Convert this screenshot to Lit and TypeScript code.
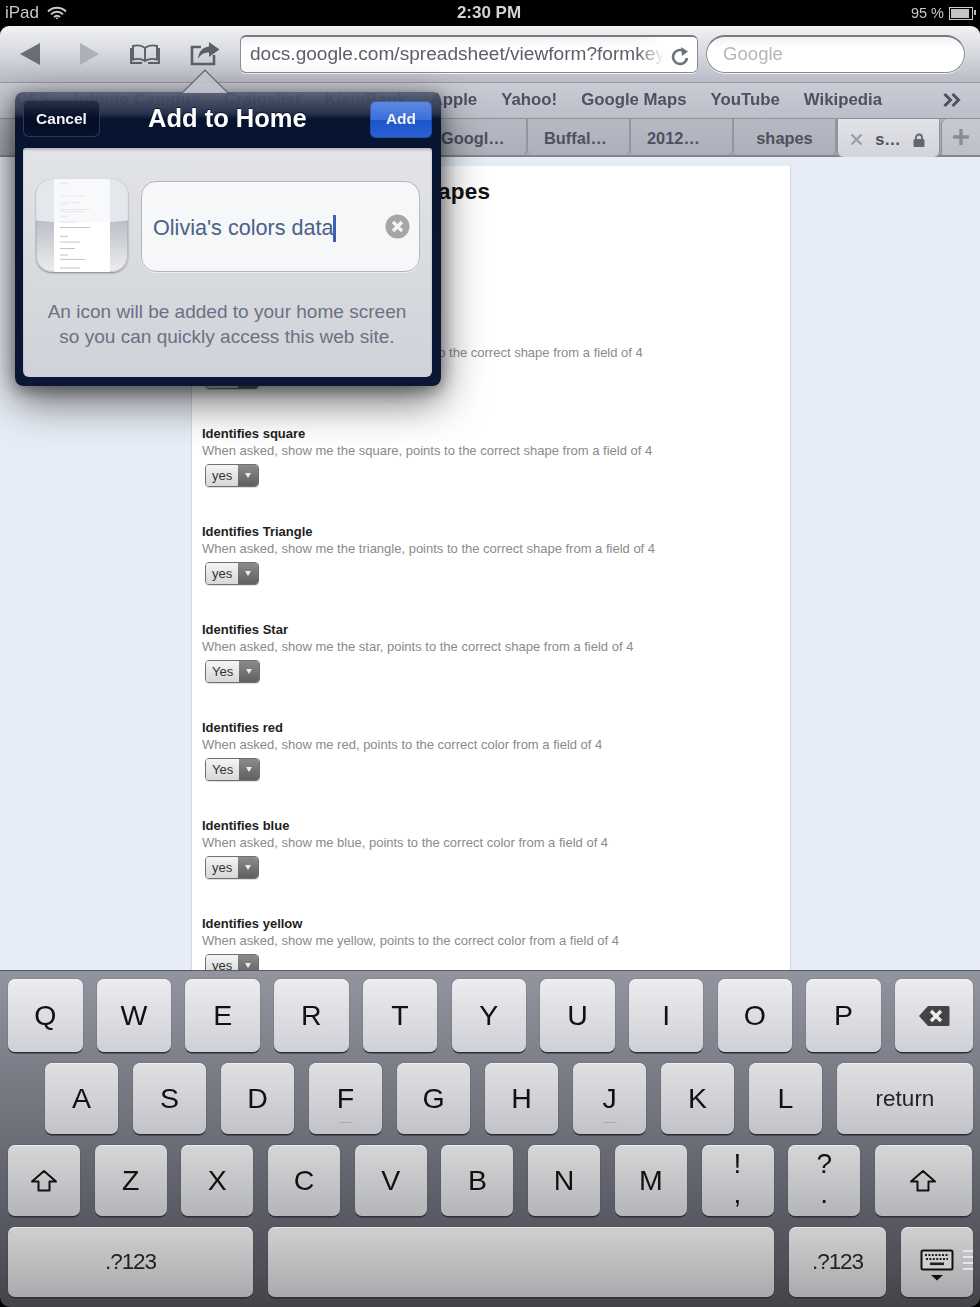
import { LitElement, html, css, svg } from "lit";
import { customElement } from "lit/decorators.js";

const FORM = [
  ["Identifies circle", "When asked, show me the circle, points to the correct shape from a field of 4", "yes"],
  ["Identifies square", "When asked, show me the square, points to the correct shape from a field of 4", "yes"],
  ["Identifies Triangle", "When asked, show me the triangle, points to the correct shape from a field of 4", "yes"],
  ["Identifies Star", "When asked, show me the star, points to the correct shape from a field of 4", "Yes"],
  ["Identifies red", "When asked, show me red, points to the correct color from a field of 4", "Yes"],
  ["Identifies blue", "When asked, show me blue, points to the correct color from a field of 4", "yes"],
  ["Identifies yellow", "When asked, show me yellow, points to the correct color from a field of 4", "yes"],
];
const BOOKMARKS = ["CSS", "Infinite Campus", "Craigslist", "KleinBank", "Apple", "Yahoo!", "Google Maps", "YouTube", "Wikipedia"];
const TABS = ["Olivia…", "Gmail…", "Google…", "Google…", "Googl…", "Buffal…", "2012…"];

const shiftIcon = html`<svg class="ico" width="28" height="24" viewBox="0 0 28 24"><path d="M14 2 L26 12.5 H19.5 V21.5 H8.5 V12.5 H2 Z" fill="none" stroke="#111" stroke-width="2" stroke-linejoin="round"/></svg>`;
const backIcon = html`<svg class="ico" width="32" height="22" viewBox="0 0 32 22"><path d="M10 1 H30 a1.5 1.5 0 0 1 1.5 1.5 V19.5 a1.5 1.5 0 0 1 -1.5 1.5 H10 L1 11 Z" fill="#444"/><path d="M13 6 L23 16 M23 6 L13 16" stroke="#eee" stroke-width="3.4"/></svg>`;
const kbIcon = html`<span class="kbwrap"><svg class="ico" width="34" height="32" viewBox="0 0 34 32"><rect x="1.5" y="1.5" width="31" height="19" rx="1.5" fill="#cfcfd2" stroke="#111" stroke-width="2"/><path d="M5 6 H29 M6 10 H28" stroke="#222" stroke-width="2" stroke-dasharray="2 1.4"/><rect x="10" y="13.5" width="14" height="2.6" fill="#222"/><path d="M11 26 H23 L17 31.5 Z" fill="#111"/></svg><i class="grip"></i></span>`;

type K = { t?: any; w?: number; cls?: string; bump?: boolean };
const letters = (s: string, extra: Partial<K> = {}): K[] => s.split("").map((t) => ({ t, ...extra }));
const ROWS: { cls: string; keys: K[] }[] = [
  { cls: "r1", keys: [...letters("QWERTYUIOP", { cls: "grow" }), { t: backIcon, w: 78 }] },
  {
    cls: "r2",
    keys: [
      ...letters("ASD", { w: 73 }),
      { t: "F", w: 73, bump: true },
      ...letters("GH", { w: 73 }),
      { t: "J", w: 73, bump: true },
      ...letters("KL", { w: 73 }),
      { t: "return", w: 136, cls: "word" },
    ],
  },
  {
    cls: "r3",
    keys: [
      { t: shiftIcon, w: 72 },
      ...letters("ZXCVBNM", { w: 72 }),
      { t: html`<span class="stack"><b>!</b><b>,</b></span>`, w: 72 },
      { t: html`<span class="stack"><b>?</b><b>.</b></span>`, w: 72 },
      { t: shiftIcon, w: 97 },
    ],
  },
  {
    cls: "r4",
    keys: [
      { t: ".?123", w: 245, cls: "word tight" },
      { t: "", w: 506 },
      { t: ".?123", w: 97, cls: "word tight" },
      { t: kbIcon, w: 72 },
    ],
  },
];

const thumbLines = [6, 23, 32, 35, 42, 45, 51, 59, 67, 79, 87, 96, 105, 111, 123];

@customElement("app-root")
export class AppRoot extends LitElement {
  static styles = css`
    :host {
      display: block;
      width: 980px;
      height: 1307px;
      position: relative;
      overflow: hidden;
      background: #000;
      font-family: "Liberation Sans", Arial, sans-serif;
    }
    .screen { display: flex; flex-direction: column; height: 1307px; filter: blur(0.35px); }

    .status { height: 26px; display: grid; grid-template-columns: 1fr auto 1fr; align-items: center; color: #c9c9c9; padding: 0 7px 0 5px; flex: none; }
    .status .l { display: flex; align-items: center; gap: 8px; font-size: 17px; }
    .status .c { font-size: 17px; font-weight: bold; color: #d4d4d4; }
    .status .r { display: flex; justify-content: flex-end; align-items: center; gap: 5px; font-size: 14.5px; }
    .batt { width: 20px; height: 9px; border: 1.5px solid #ccc; padding: 1px; display: block; position: relative; }
    .batt::before { content: ""; display: block; width: 18px; height: 9px; background: #c4c4c4; }
    .batt::after { content: ""; position: absolute; right: -4px; top: 2.5px; width: 2px; height: 5px; background: #bbb; }

    .toolbar {
      height: 57px; flex: none; display: flex; align-items: center; position: relative;
      background: linear-gradient(#f1f2f5 0%, #d9dbe1 45%, #b9bcc6 100%);
      border-radius: 9px 9px 0 0; border-bottom: 1px solid #9a9ca5; box-sizing: border-box; padding-bottom: 1px;
    }
    .tool { display: block; flex: none; }
    .t-back { margin-left: 20px; }
    .t-fwd { margin-left: 40px; }
    .t-book { margin-left: 31px; }
    .t-share { margin-left: 30px; }
    .url {
      margin-left: 20px; width: 458px; height: 38px; box-sizing: border-box; flex: none;
      border: 1px solid #8a8c92; border-top: 2px solid #777a82; border-radius: 6px;
      background: linear-gradient(#f1f1f1, #fff 30%);
      display: flex; align-items: center; padding-left: 9px; position: relative; overflow: hidden;
      font-size: 19.1px; color: #5c6068; white-space: nowrap; box-shadow: 0 1px 0 #f2f3f5;
    }
    .url::after { content: ""; position: absolute; right: 0; top: 0; bottom: 0; width: 60px; background: linear-gradient(90deg, rgba(255,255,255,0), #fff 45%); }
    .reload { position: absolute; right: 7px; top: 8px; z-index: 1; }
    .search {
      margin-left: 8px; width: 259px; height: 38px; box-sizing: border-box; flex: none;
      border: 1px solid #8a8c92; border-top: 2px solid #777a82; border-radius: 19px;
      background: linear-gradient(#f1f1f1, #fff 30%);
      display: flex; align-items: center; padding-left: 16px; font-size: 18.6px; color: #b5b7bb; box-shadow: 0 1px 0 #f2f3f5;
    }

    .bookmarks {
      height: 35px; flex: none; display: flex; justify-content: flex-end; align-items: center; gap: 24px;
      background: linear-gradient(#c9ccd4, #bcbfc9); padding: 0 18px 2px 0; box-sizing: border-box;
      font-size: 16.8px; font-weight: bold; color: #4d5160; white-space: nowrap;
    }
    .more { margin-left: 37px; display: block; margin-right: 1px; }

    .tabs {
      height: 39px; flex: none; display: flex; justify-content: flex-end; box-sizing: border-box;
      background: linear-gradient(#aeb1bb, #a4a7b2); border-top: 1px solid #8f919b; border-bottom: 2px solid #83858f;
    }
    .tab {
      width: 103px; flex: none; display: flex; align-items: center; box-sizing: border-box; padding: 3px 0 0 16px;
      font-size: 16.4px; font-weight: bold; color: #4d5160; border-right: 2px solid #93959f; border-radius: 0 0 6px 6px;
      background: linear-gradient(#b7bac3, #adb0ba); white-space: nowrap;
    }
    .tab.center { justify-content: center; padding-left: 0; }
    .tab.active {
      background: linear-gradient(#e1e3e8, #d2d4da); justify-content: space-between; padding: 3px 14px 0 12px;
      border: 1px solid #8f919b; border-top: none; margin-bottom: -2px; border-bottom: none; border-radius: 0 0 6px 6px; color: #4d5160; position: relative;
    }
    .tab.plus { width: 39px; justify-content: center; padding: 0; background: linear-gradient(#c8cad2, #bcbfc8); border: none; border-left: 1px solid #8f919b; border-radius: 6px 0 0 0; margin-left: 1px; }

    .page { flex: 1; min-height: 0; overflow: hidden; background: #e7edf6; padding: 9px 0 0 191px; }
    .sheet { width: 600px; height: 900px; background: #fff; box-sizing: border-box; padding: 14px 11px 0; box-shadow: inset 1px 0 0 #d5d8dd, inset -1px 0 0 #d5d8dd; }
    .sheet h1 { margin: 0 0 124px; font-size: 22.5px; letter-spacing: .2px; line-height: 24px; font-weight: bold; color: #111; white-space: nowrap; }
    .item { height: 98px; box-sizing: border-box; }
    .item .ti { font-size: 13px; font-weight: bold; color: #1e1e1e; line-height: 16px; }
    .item .de { font-size: 13px; color: #8a8a8a; line-height: 16px; margin-top: 1px; white-space: nowrap; }
    .sel {
      display: inline-flex; height: 23px; margin: 5px 0 0 3px; box-sizing: border-box; border: 1px solid #6f6f6f; border-radius: 4px; overflow: hidden;
      font-size: 13px; color: #333; box-shadow: 0 1px 0 rgba(0,0,0,.12);
    }
    .sel .v { padding: 0 6px; display: flex; align-items: center; background: linear-gradient(#f4f4f4, #d8d8d8); }
    .sel .a { width: 20px; display: flex; align-items: center; justify-content: center; background: linear-gradient(#8b8b8b, #5f5f5f); }
    .sel .a::after { content: ""; border: 3.5px solid transparent; border-top: 5px solid #eee; border-bottom: none; }

    .keyboard {
      height: 337px; flex: none; box-sizing: border-box; padding-top: 8px; border-top: 1px solid #55565e;
      background: linear-gradient(#92959f, #6f717b 45%, #4c4d55 90%, #434449);
      border-radius: 0 0 10px 10px; display: flex; flex-direction: column; gap: 11px;
    }
    .row { display: flex; }
    .r1 { height: 73px; gap: 14.2px; padding: 0 7px 0 8px; --k1: #ececef; --k2: #cfd0d6; }
    .r2 { height: 71px; gap: 15px; padding: 0 7px 0 45px; --k1: #e0e0e3; --k2: #c2c3c9; }
    .r3 { height: 71px; gap: 14.7px; padding: 0 7px 0 8px; --k1: #d6d6d8; --k2: #b4b5b9; }
    .r4 { height: 70px; gap: 15px; padding: 0 7px 0 8px; --k1: #d0d0d1; --k2: #aaaaae; }
    .key {
      flex: none; position: relative; display: flex; align-items: center; justify-content: center; border-radius: 7px;
      background: linear-gradient(var(--k1), var(--k2));
      box-shadow: 0 1.5px 0 #2d2d33, 0 0 1px rgba(20,20,25,.7), inset 0 1px 0 rgba(255,255,255,.55);
      font-size: 28.5px; color: #111;
    }
    .key.grow { flex: 1 1 0; }
    .key.word { font-size: 22.5px; color: #222; }
    .key.tight { letter-spacing: -1.1px; }
    .bump { position: absolute; bottom: 11px; left: 50%; margin-left: -7px; width: 14px; height: 1.5px; background: #aaabb0; }
    .ico { display: block; }
    .stack { display: flex; flex-direction: column; align-items: center; font-size: 28px; margin-top: -4px; }
    .stack b { font-weight: normal; display: block; height: 30px; line-height: 30px; }
    .kbwrap { display: block; margin-top: 6px; }
    .grip { position: absolute; right: 0; top: 23px; width: 10px; height: 22px; background: repeating-linear-gradient(#e6e6e8 0 2px, transparent 2px 6px); }

    .pop { position: absolute; left: 15px; top: 69px; width: 426px; filter: blur(0.35px); }
    .tip { position: absolute; left: 167px; top: 0; display: block; }
    .panel {
      position: absolute; left: 0; top: 23px; width: 426px; height: 294px; box-sizing: border-box; padding: 0 9px 9px 8px;
      border-radius: 8px; display: flex; flex-direction: column;
      background: linear-gradient(rgba(84,92,112,.93) 0, rgba(36,46,72,.97) 21px, #07142f 27px, #081532 56px, #0a1835 100%);
      box-shadow: 0 14px 44px rgba(0,0,0,.6), 0 4px 16px rgba(0,0,0,.4);
    }
    .phead { height: 56px; flex: none; display: flex; align-items: center; justify-content: space-between; box-sizing: border-box; padding-bottom: 3px; position: relative; }
    .phead h2 { position: absolute; left: 125px; top: 9px; margin: 0; font-size: 25.5px; line-height: 34px; font-weight: bold; color: #fff; white-space: nowrap; text-shadow: 0 -1px 0 rgba(0,0,0,.6); }
    .btn { height: 37px; box-sizing: border-box; display: flex; align-items: center; justify-content: center; border-radius: 6px; font-size: 15.5px; font-weight: bold; color: #f2f2f2; }
    .btn.cancel { width: 77px; background: linear-gradient(rgba(30,38,60,.6), #040d24 55%, #071230); box-shadow: inset 0 0 0 1px rgba(60,70,95,.75); }
    .btn.add { width: 62px; margin-top: 1px; background: linear-gradient(#5f8ce0 0, #3a6fdc 50%, #1f55cc 52%, #2a60d2 100%); box-shadow: inset 0 0 0 1px rgba(30,60,140,.5); }
    .pbody {
      flex: 1; border-radius: 3px 3px 6px 6px; background: linear-gradient(#e2e4e8, #cfd2d8);
      padding: 31px 12px 0 13px; box-shadow: inset 0 2px 2px rgba(60,60,70,.25);
    }
    .prow { display: flex; gap: 13px; }
    .thumb {
      width: 92px; height: 93px; border-radius: 16px; flex: none; position: relative; overflow: hidden;
      background: linear-gradient(#bcbfc9 45%, #eceded); box-shadow: 0 1px 2px rgba(0,0,0,.4), inset 0 0 0 1px rgba(150,150,160,.4);
    }
    .thumb svg { position: absolute; left: 18px; top: 0; display: block; }
    .gloss { position: absolute; left: -30px; right: -30px; top: -40px; height: 84px; border-radius: 0 0 50% 50% / 0 0 14% 14%; background: rgba(244,246,250,.72); }
    .field {
      width: 279px; height: 91px; margin-top: 2px; box-sizing: border-box; border: 1px solid #b4b6bc; border-radius: 15px;
      background: #f6f7f9; display: flex; align-items: center; padding: 4px 9px 0 11px; font-size: 21.6px; color: #4a6187; box-shadow: 0 1px 0 #eceef0;
    }
    .caret { display: inline-block; width: 3.5px; height: 27px; background: #3f5fb4; vertical-align: middle; margin: -3px 0 0 -1px; }
    .clear { margin-left: auto; display: block; margin-top: -4px; }
    .desc { margin: 28px 2px 0 0; text-align: center; font-size: 19.05px; line-height: 24.5px; color: #6a7184; white-space: nowrap; }
  `;

  render() {
    return html`
      <div class="screen">
        <div class="status">
          <div class="l">iPad
            <svg width="20" height="14" viewBox="0 0 20 14"><path d="M1 5.5 C6 .5 14 .5 19 5.5 M4 8.3 C7.5 4.8 12.5 4.8 16 8.3 M7 11 C8.8 9.4 11.2 9.4 13 11" fill="none" stroke="#ccc" stroke-width="1.9"/><path d="M8.6 12 L10 13.6 L11.4 12 C10.6 11.3 9.4 11.3 8.6 12Z" fill="#ccc"/></svg>
          </div>
          <div class="c">2:30 PM</div>
          <div class="r">95 %<span class="batt"></span></div>
        </div>

        <div class="toolbar">
          <svg class="tool t-back" width="20" height="22" viewBox="0 0 20 22"><path d="M20 0 V22 L0 11 Z" fill="#6a6e78"/></svg>
          <svg class="tool t-fwd" width="19" height="22" viewBox="0 0 19 22"><path d="M0 0 V22 L19 11 Z" fill="#aeb1ba"/></svg>
          <svg class="tool t-book" width="30" height="20" viewBox="0 0 30 20"><path d="M15 4 C12 1.5 7 1 3 2 V15.5 C7 14.5 12 15 15 17 C18 15 23 14.5 27 15.5 V2 C23 1 18 1.5 15 4 Z M15 4 V17 M3 5 H1 V19 H12 M27 5 H29 V19 H18" fill="none" stroke="#5b5f69" stroke-width="1.9"/></svg>
          <svg class="tool t-share" width="30" height="24" viewBox="0 0 30 24"><path d="M11 5 H2 V22 H24 V13" fill="none" stroke="#5b5f69" stroke-width="2.6"/><path d="M19 0 L29.5 7.5 L19 15 V10.5 C14 10.5 10.5 12.5 8 17 C8.5 10 12.5 5 19 4.5 Z" fill="#5b5f69"/></svg>
          <div class="url">docs.google.com/spreadsheet/viewform?formkey
            <svg class="reload" width="20" height="22" viewBox="0 0 20 22"><path d="M15.5 7.5 A7 7 0 1 0 17 13" fill="none" stroke="#6e727b" stroke-width="2.6"/><path d="M11 2 L18 6.5 L12 11 Z" fill="#6e727b"/></svg>
          </div>
          <div class="search">Google</div>
        </div>

        <div class="bookmarks">
          ${BOOKMARKS.map((b) => html`<span>${b}</span>`)}
          <svg class="more" width="18" height="14" viewBox="0 0 18 14"><path d="M1.5 1 L7.5 7 L1.5 13 M9.5 1 L15.5 7 L9.5 13" fill="none" stroke="#4d5160" stroke-width="3"/></svg>
        </div>

        <div class="tabs">
          ${TABS.map((t) => html`<div class="tab">${t}</div>`)}
          <div class="tab center">shapes</div>
          <div class="tab active">
            <svg width="13" height="13" viewBox="0 0 13 13"><path d="M1.5 1.5 L11.5 11.5 M11.5 1.5 L1.5 11.5" stroke="#9b9ea6" stroke-width="2.2"/></svg>
            <span>s…</span>
            <svg width="12" height="14" viewBox="0 0 12 14"><path d="M3 6.5 V4.5 a3 3 0 0 1 6 0 V6.5" fill="none" stroke="#62666f" stroke-width="1.8"/><rect x="0.5" y="6" width="11" height="8" rx="1.5" fill="#62666f"/></svg>
          </div>
          <div class="tab plus"><svg width="16" height="16" viewBox="0 0 16 16"><path d="M8 0 V16 M0 8 H16" stroke="#8a8d96" stroke-width="3.4"/></svg></div>
        </div>

        <div class="page">
          <div class="sheet">
            <h1>Olivia's colors and shapes</h1>
            ${FORM.map(
              ([t, d, v]) => html`<div class="item">
                <div class="ti">${t}</div>
                <div class="de">${d}</div>
                <div class="sel"><span class="v">${v}</span><span class="a"></span></div>
              </div>`
            )}
          </div>
        </div>

        <div class="keyboard">
          ${ROWS.map(
            (r) => html`<div class="row ${r.cls}">
              ${r.keys.map(
                (k) => html`<div class="key ${k.cls ?? ""}" style=${k.w ? `width:${k.w}px` : ""}>${k.t}${k.bump ? html`<i class="bump"></i>` : ""}</div>`
              )}
            </div>`
          )}
        </div>
      </div>

      <div class="pop">
        <div class="panel">
          <div class="phead">
            <div class="btn cancel">Cancel</div>
            <h2>Add to Home</h2>
            <div class="btn add">Add</div>
          </div>
          <div class="pbody">
            <div class="prow">
              <div class="thumb">
                <svg width="56" height="93" viewBox="0 0 56 93">
                  <rect width="56" height="93" fill="#fff"/>
                  ${thumbLines.map((y, i) => svg`<rect x="6" y=${y * 0.72} width=${i % 3 === 0 ? 8 : 30 - (i % 4) * 5} height="0.8" fill="#b4b4b8"/>`)}
                </svg>
                <div class="gloss"></div>
              </div>
              <div class="field">
                <span>Olivia's colors data<i class="caret"></i></span>
                <svg class="clear" width="25" height="25" viewBox="0 0 25 25"><circle cx="12.5" cy="12.5" r="12" fill="#a6a6a9"/><path d="M8 8 L17 17 M17 8 L8 17" stroke="#f5f5f6" stroke-width="3.2"/></svg>
              </div>
            </div>
            <p class="desc">An icon will be added to your home screen<br />so you can quickly access this web site.</p>
          </div>
        </div>
        <svg class="tip" width="46" height="24" viewBox="0 0 46 24"><path d="M0 24 L23 1 L46 24 Z" fill="#c0c3cc" opacity=".9"/><path d="M0 24 L23 1 L46 24" fill="none" stroke="#5c606c" stroke-width="1.2"/></svg>
      </div>
    `;
  }
}
